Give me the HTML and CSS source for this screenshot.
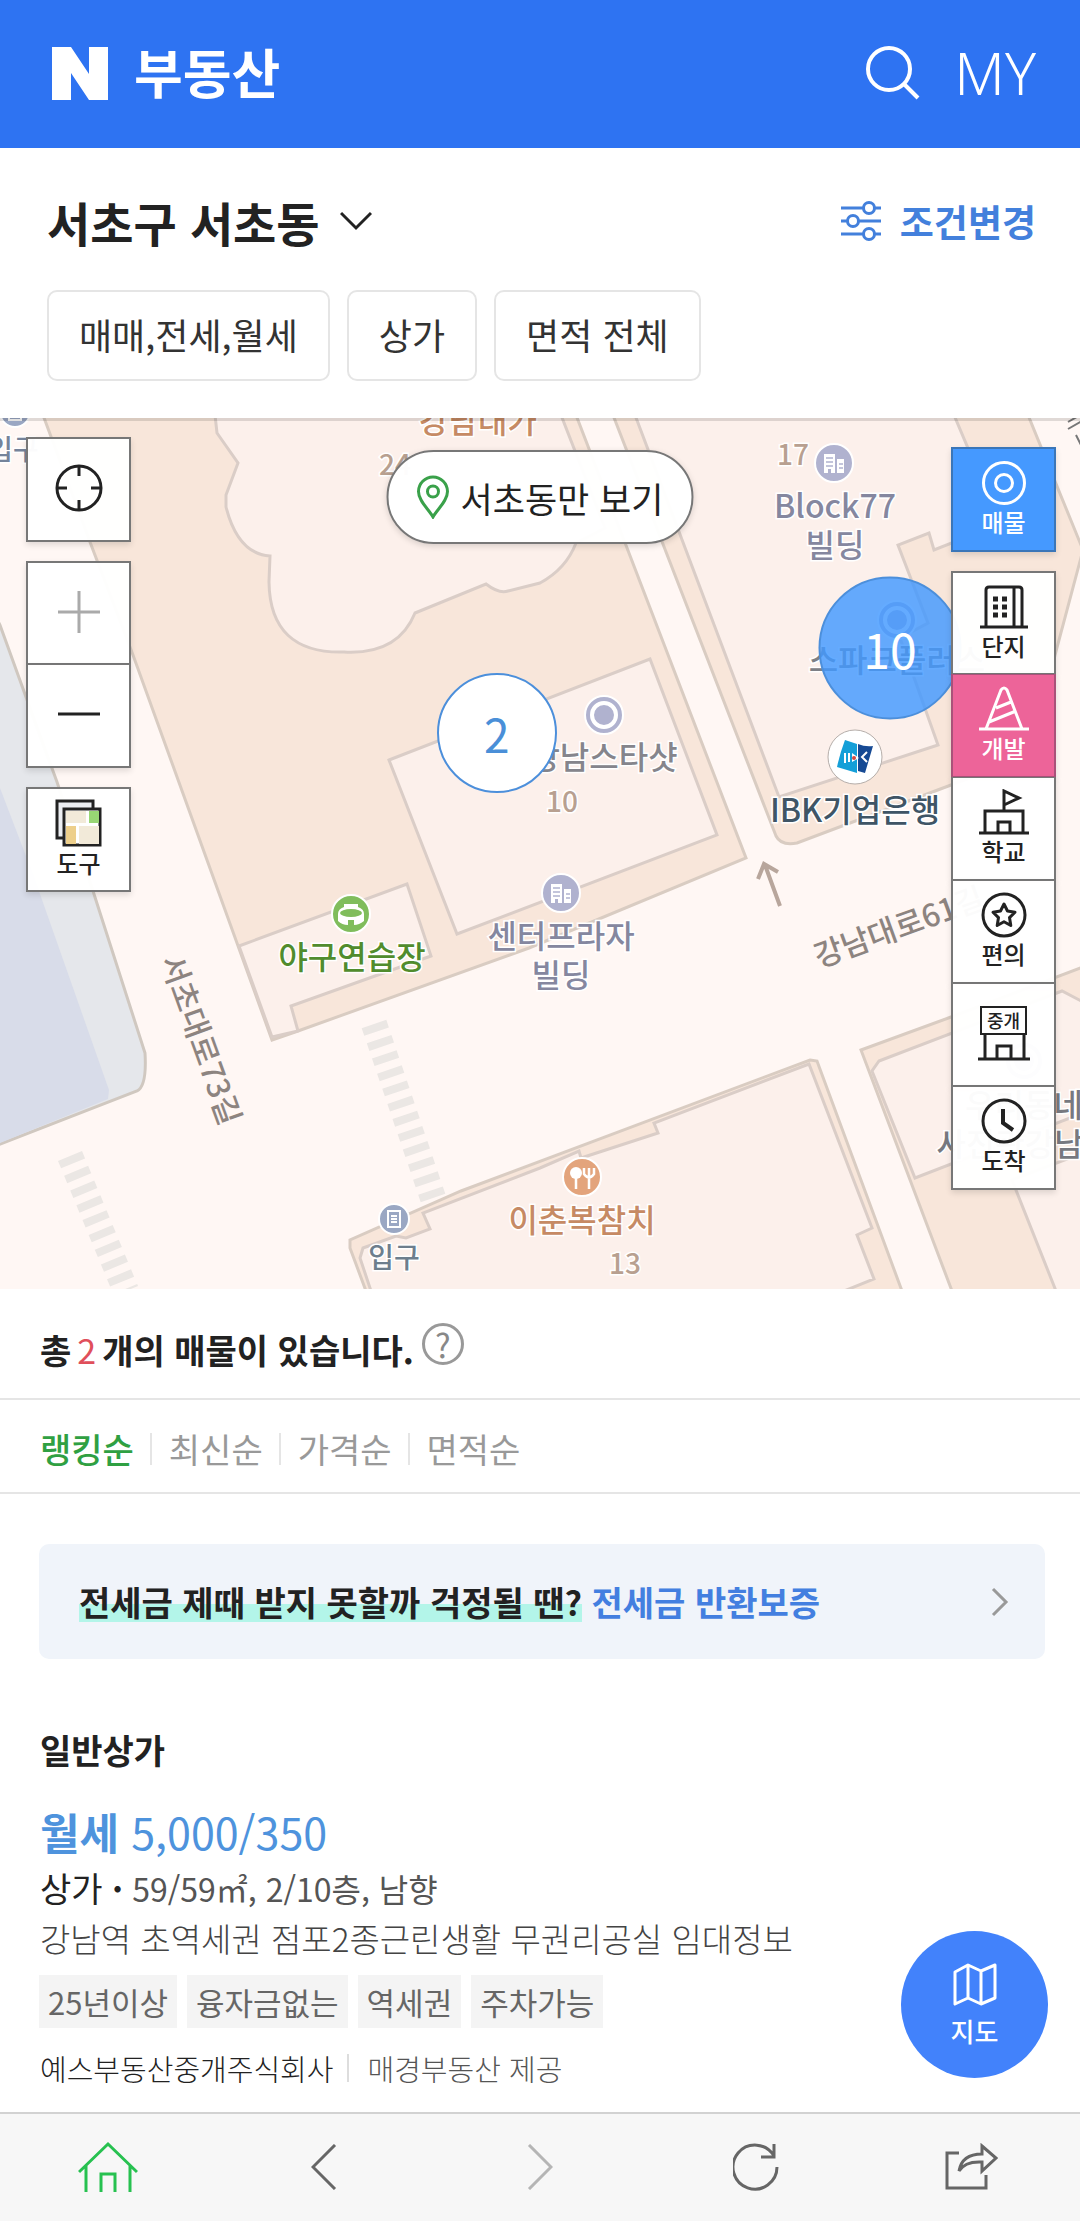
FILE: index.html
```html
<!DOCTYPE html>
<html lang="ko">
<head>
    <meta charset="UTF-8">
    <meta name="viewport" content="width=device-width, initial-scale=1.0">
    <title>부동산</title>
    <link rel="stylesheet" href="styles.css">
</head>
<body>
    <header class="header">
        <a href="#" class="logo">
            <svg class="logo-mark" viewBox="0 0 56 53"><path d="M0 0h19l18 27V0h19v53H37L19 26v27H0z" fill="#fff"/></svg>
            <span>부동산</span>
        </a>
        <div class="header-links">
            <button class="icon-button" aria-label="검색">
                <svg width="54" height="54" viewBox="0 0 54 54" fill="none" stroke="#fff" stroke-width="4"><circle cx="23" cy="23" r="21"/><path d="M38 38l14 14"/></svg>
            </button>
            <a href="#" class="my">MY</a>
        </div>
    </header>

    <section class="search-filter">
        <div class="area-row">
            <button class="area-button">서초구 서초동
                <svg width="32" height="20" viewBox="0 0 32 20" fill="none" stroke="#222" stroke-width="3"><path d="M1 2l15 15L31 2"/></svg>
            </button>
            <button class="condition-button">
                <svg width="40" height="40" viewBox="0 0 40 40" fill="none" stroke="#4380dc" stroke-width="3"><path d="M0 7h22M34 7h6M0 20h6M18 20h22M0 33h22M34 33h6"/><circle cx="28" cy="7" r="5.500"/><circle cx="12" cy="20" r="5.500"/><circle cx="28" cy="33" r="5.500"/></svg>
                조건변경
            </button>
        </div>
        <div class="chips">
            <button class="chip">매매,전세,월세</button>
            <button class="chip">상가</button>
            <button class="chip">면적 전체</button>
        </div>
    </section>

    <section class="map">
        <svg class="map-canvas" viewBox="0 0 1080 871">
            <defs>
                <g id="building">
                    <circle r="19" fill="#b0b2cf" stroke="#fff" stroke-width="2"/>
                    <path d="M-10 10V-9h11V10h-4V6h-3v4zM3 10V-4h7V10z" fill="#fff"/>
                    <path d="M-8-5H-1M-8-1H-1M-8 3H-1M5 1h4M5 5h4" stroke="#b0b2cf" stroke-width="1.500"/>
                </g>
                <g id="spot">
                    <circle r="19" fill="#b0b2cf" stroke="#fff" stroke-width="2"/>
                    <circle r="12" fill="#b0b2cf" stroke="#fff" stroke-width="4"/>
                </g>
                <g id="entrance">
                    <circle r="15" fill="#9aa7c3" stroke="#fff" stroke-width="2"/>
                    <path d="M-6-8H6V8H-6zM-3-3H3M-3 0H3M-3 3H3" fill="none" stroke="#fff" stroke-width="2"/>
                </g>
            </defs>

            <!-- blocks -->
            <rect width="1080" height="871" fill="#fff7f4"/>
            <path class="park" d="M-2 203L0 207 26 279 57 364 93 473 145 635Q147 668 137 673L-2 727z"/>
            <path d="M0 370L34 459 109 672 108 681 0 725z" fill="#d8dce9"/>
            <g class="block">
                <path d="M43-3L90 124 133 237 207 442 272 622 298 613 529 530 746 440 576-3z"/>
                <path d="M613-3L776 418Q781 428 797 425L951 367 1035 335 1055 237 1083 132 1028-3z"/>
                <path d="M810 642L817 643 902 873H366L350 830V822L461 773z"/>
                <path d="M861 632L951 599 1083 549V873H952z"/>
            </g>
            <g class="house">
                <path d="M215-3L217 15 238 45 226 77V89Q238 136 270 138L269 164Q270 236 344 234 398 237 415 195L486 166Q499 176 508 173L540 165Q566 151 576 125L605 110 561-3z"/>
                <path d="M389 342L650 241 717 417 457 516z"/>
                <path d="M407 466L431 538 291 588 298 613 272 619 239 528z"/>
                <path d="M635-3L779 379 938 327 900 220 928 205 898 127 929 115 934 132 1000 106 954-3z"/>
                <path d="M371 873L360 840 363 830 396 818 406 820 430 811 423 795 540 750 579 733 581 740 658 715 654 705 809 646 872 810 857 817 874 861 844 873z"/>
                <path d="M879 643L1062 573 1083 584V695L915 760 872 653z"/>
                <path d="M1012 762L1083 735V873H1056z"/>
            </g>
            <path class="crossing" d="M374 606L433 780"/>
            <path class="crossing" d="M70 738L126 873"/>
            <path d="M780 488L765 447M758 461L764 446 778 454" fill="none" stroke="#b8a69c" stroke-width="4"/>
            <path d="M1068 4L1082-4M1068 11L1082 3M1076 17L1082 29" stroke="#777" stroke-width="2"/>

            <!-- place icons -->
            <use href="#entrance" x="15" y="-6"/>
            <use href="#entrance" x="394" y="801"/>
            <use href="#building" x="834" y="45"/>
            <use href="#building" x="561" y="475"/>
            <use href="#spot" x="604" y="297"/>
            <use href="#spot" x="897" y="202"/>
            <use href="#spot" x="1024" y="643"/>
            <g transform="translate(351 496)">
                <circle r="19" fill="#80bd5c" stroke="#fff" stroke-width="2"/>
                <path d="M-7-10H7V-7Q13-5 13 0V7Q8 11 3 11V6H-3v5Q-9 11-13 7V0Q-13-5-7-7z" fill="#fff"/>
                <ellipse cy="-1" rx="11" ry="4" fill="#80bd5c"/>
            </g>
            <g transform="translate(582 759)">
                <circle r="19" fill="#e3a47c" stroke="#fff" stroke-width="2"/>
                <circle cx="-6" cy="-4" r="6" fill="#fff"/>
                <path d="M-6 0V12M7 0V12M2-9V-3Q7 4 12-3V-9M7-9V0" fill="none" stroke="#fff" stroke-width="2.500"/>
            </g>
            <g transform="translate(855 339)">
                <circle r="27" fill="#fff" stroke="#b5aeaa" stroke-width="1"/>
                <path d="M-10-17L2-13V16L-18 10Q-15-4-10-17z" fill="#149fd8"/>
                <path d="M3-13Q10-10 18-11L10 16 3 14z" fill="#164a94"/>
                <path d="M-10-4V6M-6-4V5M12-5L7 0 12 5" fill="none" stroke="#fff" stroke-width="2"/>
                <path d="M-3-4L4 1-3 5z" fill="#fff"/>
                <circle cx="-1" cy="1" r="2" fill="#d34a42"/>
            </g>

            <!-- place names -->
            <g class="place">
                <text x="478" y="15" fill="#c68a64">강남대가</text>
                <text x="13" y="42" class="place-small" fill="#75839a">입구</text>
                <text x="835" y="100" fill="#85879f">Block77</text>
                <text x="835" y="139" fill="#85879f">빌딩</text>
                <text x="897" y="254" fill="#7d8086">스파크플러스</text>
                <text x="604" y="351" fill="#85858c">강남스타샷</text>
                <text x="855" y="404" fill="#3f5566">IBK기업은행</text>
                <text x="352" y="551" fill="#518c2d">야구연습장</text>
                <text x="561" y="530" fill="#85879f">센터프라자</text>
                <text x="561" y="569" fill="#85879f">빌딩</text>
                <text x="582" y="814" fill="#c68a64">이춘복참치</text>
                <text x="394" y="850" class="place-small" fill="#6d7e8d">입구</text>
                <text x="1024" y="699" fill="#777980">우리동네</text>
                <text x="1010" y="738" fill="#777980">사진관강남</text>
                <g class="place-small" fill="#b8a090">
                    <text x="395" y="57">24</text>
                    <text x="793" y="47">17</text>
                    <text x="562" y="394">10</text>
                    <text x="625" y="856">13</text>
                </g>
            </g>
            <g class="road-name">
                <text transform="translate(160 542) rotate(70)">서초대로73길</text>
                <text transform="translate(819 550) rotate(-20)">강남대로61길</text>
            </g>
            <rect class="map-edge" width="1080" height="3"/>
        </svg>

        <button class="marker marker-small">2</button>
        <button class="marker marker-large">10</button>

        <button class="only-area">
            <svg width="33" height="44" viewBox="0 0 33 44" fill="none" stroke="#3aa14a" stroke-width="3"><path d="M16.500 42C12 34 2 26 2 16.500a14.500 14.500 0 0 1 29 0C31 26 21 34 16.500 42z"/><circle cx="16.500" cy="16.500" r="5.500"/></svg>
            서초동만 보기
        </button>

        <div class="map-tools map-tools-left">
            <button class="tool" aria-label="현재 위치">
                <svg width="48" height="48" viewBox="0 0 48 48" fill="none" stroke="#222" stroke-width="3"><circle cx="24" cy="24" r="22"/><path d="M24 2v10M24 36v10M2 24h10M36 24h10"/></svg>
            </button>
            <div class="tool-group">
                <button class="tool" aria-label="확대">
                    <svg width="42" height="42" viewBox="0 0 42 42" stroke="#aaa" stroke-width="3"><path d="M0 21h42M21 0v42"/></svg>
                </button>
                <button class="tool" aria-label="축소">
                    <svg width="42" height="42" viewBox="0 0 42 42" stroke="#222" stroke-width="3"><path d="M0 21h42"/></svg>
                </button>
            </div>
            <button class="tool">
                <svg width="48" height="48" viewBox="0 0 48 48"><path d="M2 2h36v37H2z" fill="#eceef2" stroke="#222" stroke-width="3"/><path d="M9 10h36v36H9z" fill="#fff" stroke="#222" stroke-width="3"/><path d="M11 12h20v12H11zM24 27h20v18H24z" fill="#f2ead9"/><path d="M34 12h10v12H34z" fill="#98d674"/><path d="M11 27h10v18H11z" fill="#edcf8b"/></svg>
                도구
            </button>
        </div>

        <div class="map-tools map-tools-right">
            <button class="tool tool-blue">
                <svg width="46" height="46" viewBox="0 0 46 46" fill="none" stroke="#fff" stroke-width="3"><circle cx="23" cy="23" r="20.500"/><circle cx="23" cy="23" r="8.500"/></svg>
                매물
            </button>
            <div class="tool-group">
                <button class="tool">
                    <svg width="48" height="46" viewBox="0 0 48 46" fill="none" stroke="#222" stroke-width="3"><path d="M0 43h48M6 43V6q0-3 3-3h30q3 0 3 3v37M34 3v40"/><path d="M13 15h5M22 15h5M13 23h5M22 23h5M13 31h5M22 31h5" stroke-width="5"/></svg>
                    단지
                </button>
                <button class="tool tool-pink">
                    <svg width="50" height="46" viewBox="0 0 50 46" fill="none" stroke="#fff" stroke-width="3"><path d="M0 43h50M7 43L22 4q3-4 6 0l15 39M17 22l15-6M10 36l27-11"/></svg>
                    개발
                </button>
                <button class="tool">
                    <svg width="50" height="46" viewBox="0 0 50 46" fill="none" stroke="#222" stroke-width="3"><path d="M0 44h50M6 44V22h38v22M19 44V33h12v11M25 22V2l15 7-15 7"/></svg>
                    학교
                </button>
                <button class="tool">
                    <svg width="46" height="46" viewBox="0 0 46 46" fill="none" stroke="#222" stroke-width="3" stroke-linejoin="round"><circle cx="23" cy="23" r="21"/><path d="M23 12l3.500 7 7.500 1.200-5.500 5.400 1.300 7.900-6.800-3.700-6.800 3.700 1.300-7.900L12 20.200l7.500-1.200z"/></svg>
                    편의
                </button>
                <button class="tool">
                    <span class="agency-icon"><span class="agency-sign">중개</span>
                        <svg width="52" height="26" viewBox="0 0 52 26" fill="none" stroke="#222" stroke-width="3"><path d="M0 24h52M7 24V0M46 24V0M19 24V11h14v13"/></svg>
                    </span>
                </button>
                <button class="tool">
                    <svg width="46" height="46" viewBox="0 0 46 46" fill="none" stroke="#222" stroke-width="3"><circle cx="23" cy="23" r="21"/><path d="M22 11v14l10 7" stroke-width="4"/></svg>
                    도착
                </button>
            </div>
        </div>
    </section>

    <section class="summary">
        <h2 class="summary-title">총<span class="count">2</span>개의 매물이 있습니다.</h2>
        <button class="help" aria-label="도움말">?</button>
    </section>

    <nav class="sort">
        <a href="#" class="sort-link active">랭킹순</a>
        <a href="#" class="sort-link">최신순</a>
        <a href="#" class="sort-link">가격순</a>
        <a href="#" class="sort-link">면적순</a>
    </nav>

    <main class="content">
        <a href="#" class="banner">
            <span><span class="banner-mark">전세금 제때 받지 못할까 걱정될 땐?</span> <span class="banner-link">전세금 반환보증</span></span>
            <svg width="18" height="30" viewBox="0 0 18 30" fill="none" stroke="#999" stroke-width="3"><path d="M2 2l13 13L2 28"/></svg>
        </a>

        <article class="item">
            <h3 class="item-title">일반상가</h3>
            <p class="price"><strong>월세</strong> 5,000/350</p>
            <p class="spec"><span class="spec-type">상가 <b>·</b></span> 59/59㎡, 2/10층, 남향</p>
            <p class="description">강남역 초역세권 점포2종근린생활 무권리공실 임대정보</p>
            <ul class="tags">
                <li>25년이상</li>
                <li>융자금없는</li>
                <li>역세권</li>
                <li>주차가능</li>
            </ul>
            <p class="agent"><span class="agent-name">예스부동산중개주식회사</span><span class="provider">매경부동산 제공</span></p>
        </article>
    </main>

    <button class="map-button">
        <svg width="44" height="44" viewBox="0 0 44 44" fill="none" stroke="#fff" stroke-width="3" stroke-linejoin="round"><path d="M2 9L15 2l13 6 14-6v33l-14 6-13-6-13 6zM15 2v33M28 8v33"/></svg>
        지도
    </button>

    <nav class="toolbar">
        <a href="#" aria-label="홈">
            <svg width="60" height="52" viewBox="0 0 60 52" fill="none" stroke="#27c150" stroke-width="3"><path d="M1 31L30 3l29 28M8 25v26M52 25v26M23 51V33h14v18"/></svg>
        </a>
        <button class="icon-button" aria-label="뒤로">
            <svg width="26" height="46" viewBox="0 0 26 46" fill="none" stroke="#666" stroke-width="3"><path d="M24 1L2 23l22 22"/></svg>
        </button>
        <button class="icon-button" aria-label="앞으로">
            <svg width="26" height="46" viewBox="0 0 26 46" fill="none" stroke="#b5b5b5" stroke-width="3"><path d="M2 1l22 22L2 45"/></svg>
        </button>
        <button class="icon-button" aria-label="새로고침">
            <svg width="46" height="48" viewBox="0 0 46 48" fill="none" stroke="#666" stroke-width="3"><path d="M41 13A22 22 0 1 0 44 24M41 1v13H28"/></svg>
        </button>
        <button class="icon-button" aria-label="공유">
            <svg width="54" height="48" viewBox="0 0 54 48" fill="none" stroke="#666" stroke-width="3"><path d="M14 10H2v35h39V32M37 3l14 12-14 13V19Q20 18 14 28 17 11 37 11z"/></svg>
        </button>
    </nav>
</body>
</html>
```
FILE: styles.css
```css
* {
    box-sizing: border-box;
}

body {
    font-family: "Noto Sans CJK KR", sans-serif;
    background-color: #fff;
    color: #222;
    margin: 0;
    min-height: 100vh;
    display: flex;
    flex-direction: column;
}

button {
    font: inherit;
    color: inherit;
    background: none;
    border: none;
    padding: 0;
    cursor: pointer;
}

a {
    color: inherit;
    text-decoration: none;
}

svg {
    display: block;
    flex-shrink: 0;
}

h2, h3, p, ul {
    margin: 0;
    padding: 0;
}

.header {
    display: flex;
    justify-content: space-between;
    align-items: center;
    height: 148px;
    padding: 0 44px 2px 52px;
    background-color: #2e73f2;
    color: #fff;
}

.logo {
    display: flex;
    align-items: center;
    gap: 26px;
    font-size: 53px;
    font-weight: 700;
    line-height: 56px;
}

.logo span {
    padding-bottom: 4px;
}

.logo-mark {
    width: 56px;
    height: 53px;
}

.header-links {
    display: flex;
    align-items: center;
    gap: 34px;
}

.my {
    font-family: "Noto Sans", sans-serif;
    font-size: 58px;
    font-weight: 300;
    line-height: 60px;
}

.search-filter {
    padding: 42px 44px 37px 47px;
}

.area-row {
    display: flex;
    justify-content: space-between;
    align-items: center;
    height: 62px;
}

.area-button {
    display: flex;
    align-items: center;
    gap: 20px;
    font-size: 47px;
    font-weight: 700;
}

.condition-button {
    display: flex;
    align-items: center;
    gap: 19px;
    font-size: 37px;
    font-weight: 700;
    color: #4380dc;
}

.chips {
    display: flex;
    gap: 17px;
    margin-top: 38px;
}

.chip {
    height: 91px;
    padding: 0 30px 3px;
    border: 2px solid #e5e5e5;
    border-radius: 10px;
    font-size: 36px;
    color: #333;
}

.map {
    position: relative;
    overflow: hidden;
}

.map-canvas {
    width: 100%;
    height: auto;
}

.block path {
    fill: #f8e6da;
    stroke: #d9ccc2;
    stroke-width: 3;
}

.house path {
    fill: #fcf0eb;
    stroke: #dacdc7;
    stroke-width: 3;
}

.park {
    fill: #e5e7eb;
    stroke: #d0c8c0;
    stroke-width: 3;
}

.crossing {
    fill: none;
    stroke: #ebe7e4;
    stroke-width: 26;
    stroke-dasharray: 8 8;
}

.map-edge {
    fill: #000;
    opacity: 0.12;
}

.place {
    font-size: 32px;
    font-weight: 500;
    text-anchor: middle;
    stroke: #fff;
    stroke-width: 3px;
    paint-order: stroke;
}

.place-small {
    font-size: 28px;
}

.road-name {
    font-size: 31px;
    font-weight: 500;
    fill: #8d8480;
}

.marker {
    position: absolute;
    border-radius: 50%;
    transform: translate(-50%, -50%);
    border: 2px solid #4c8fdb;
}

.marker-small {
    left: 46%;
    top: 36.2%;
    width: 120px;
    height: 120px;
    font-size: 46px;
    background-color: #fff;
    color: #4a8fd8;
}

.marker-large {
    left: 82.4%;
    top: 26.4%;
    width: 143px;
    height: 143px;
    font-size: 48px;
    background-color: rgba(66, 153, 255, 0.82);
    color: #fff;
}

.only-area {
    position: absolute;
    top: 32px;
    left: 50%;
    transform: translateX(-50%);
    display: flex;
    align-items: center;
    gap: 11px;
    height: 94px;
    padding: 0 28px;
    border: 2px solid #777;
    border-radius: 47px;
    background-color: rgba(255, 255, 255, 0.97);
    box-shadow: 0 2px 6px rgba(0, 0, 0, 0.15);
    font-size: 35px;
    white-space: nowrap;
}

.map-tools {
    position: absolute;
    display: flex;
    flex-direction: column;
}

.map-tools-left {
    top: 19px;
    left: 26px;
    gap: 19px;
}

.map-tools-right {
    top: 29px;
    right: 24px;
    gap: 19px;
}

.tool {
    display: flex;
    flex-direction: column;
    align-items: center;
    justify-content: center;
    gap: 2px;
    width: 105px;
    height: 105px;
    padding-bottom: 3px;
    border: 2px solid #777;
    background-color: rgba(255, 255, 255, 0.97);
    box-shadow: 0 3px 6px rgba(0, 0, 0, 0.12);
    font-size: 24px;
    font-weight: 500;
    line-height: 28px;
}

.tool-group .tool {
    height: 104px;
}

.tool-group .tool + .tool {
    margin-top: -1px;
    border-top-width: 1px;
}

.tool-blue {
    background-color: #4599ff;
    border-color: #3b76b8;
    color: #fff;
}

.tool-group .tool-pink {
    background-color: #ed6499;
    border-color: #a9527a;
    color: #fff;
}

.agency-icon {
    display: flex;
    flex-direction: column;
    align-items: center;
}

.agency-sign {
    padding: 0 5px;
    border: 2px solid #222;
    font-size: 18px;
    line-height: 25px;
}

.summary {
    display: flex;
    align-items: center;
    gap: 8px;
    height: 111px;
    padding: 0 40px;
    border-bottom: 2px solid #e5e5e5;
}

.summary-title {
    font-size: 34px;
    font-weight: 700;
    padding-top: 12px;
}

.count {
    margin: 0 6px;
    font-weight: 400;
    color: #e04f5b;
}

.help {
    width: 42px;
    height: 42px;
    border: 3px solid #999;
    border-radius: 50%;
    font-size: 33px;
    line-height: 36px;
    color: #888;
}

.sort {
    display: flex;
    align-items: center;
    height: 94px;
    padding: 6px 40px 0;
    border-bottom: 2px solid #e5e5e5;
}

.sort-link {
    font-size: 34px;
    line-height: 32px;
    color: #999;
}

.sort-link + .sort-link {
    margin-left: 16px;
    padding-left: 17px;
    border-left: 2px solid #e5e5e5;
}

.sort-link.active {
    color: #2fa042;
    font-weight: 500;
}

.content {
    flex: 1;
    padding: 50px 35px 30px 39px;
}

.banner {
    display: flex;
    justify-content: space-between;
    align-items: center;
    height: 115px;
    padding: 0 36px 0 40px;
    border-radius: 10px;
    background-color: #f0f4fa;
    font-size: 34px;
    font-weight: 700;
}

.banner-mark {
    background: linear-gradient(transparent 56%, #b3f5e9 56%, #b3f5e9 91%, transparent 91%);
}

.banner-link {
    color: #437fe0;
}

.item {
    padding-top: 66px;
}

.item-title {
    font-size: 34px;
    line-height: 50px;
}

.item-title, .price, .spec, .description, .agent {
    padding-left: 1px;
}

.price {
    margin-top: 26px;
    font-size: 43px;
    line-height: 60px;
    color: #4e93dd;
}

.spec {
    margin-top: 2px;
    font-size: 32px;
    line-height: 50px;
    color: #555;
}

.spec-type {
    font-size: 34px;
    color: #222;
}

.description {
    font-size: 33px;
    line-height: 50px;
    font-weight: 300;
    color: #444;
}

.tags {
    display: flex;
    gap: 10px;
    margin-top: 12px;
    list-style: none;
}

.tags li {
    padding: 0 9px;
    background-color: #f4f4f4;
    font-size: 31px;
    line-height: 53px;
    color: #666;
}

.agent {
    display: flex;
    align-items: center;
    margin-top: 26px;
    font-size: 29px;
    line-height: 28px;
    font-weight: 300;
}

.provider {
    margin-left: 14px;
    padding-left: 18px;
    border-left: 2px solid #ddd;
    color: #555;
}

.map-button {
    position: fixed;
    right: 32px;
    bottom: 143px;
    display: flex;
    flex-direction: column;
    align-items: center;
    justify-content: center;
    gap: 8px;
    width: 147px;
    height: 147px;
    border-radius: 50%;
    background-color: #4282fb;
    color: #fff;
    font-size: 26px;
    font-weight: 500;
    line-height: 32px;
}

.toolbar {
    display: grid;
    grid-template-columns: repeat(5, 1fr);
    place-items: center;
    height: 110px;
    padding-bottom: 2px;
    border-top: 2px solid #d2d2d2;
    background-color: #f7f7f7;
}
```
